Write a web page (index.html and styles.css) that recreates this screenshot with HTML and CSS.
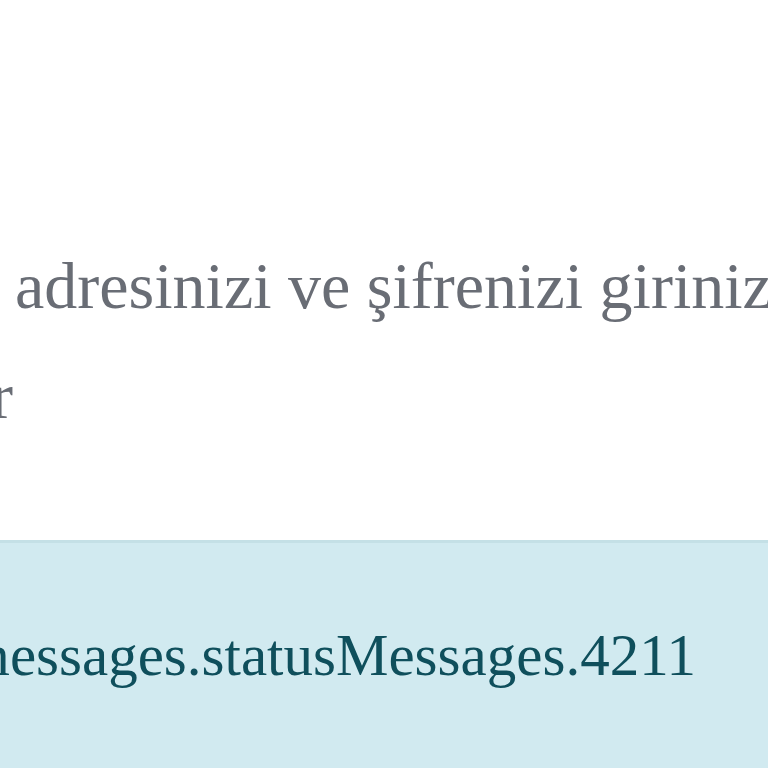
FILE: index.html
```html
<!DOCTYPE html>
<html lang="tr">
<head>
    <meta charset="UTF-8">
    <meta name="viewport" content="width=device-width, initial-scale=1.0">
    <title>Giriş</title>
    <link rel="stylesheet" href="styles.css">
</head>
<body>
    <div class="page">
        <p class="lead">
            <span class="line first">adresinizi ve şifrenizi giriniz</span>
            <span class="line second">r</span>
        </p>

        <div class="alert">
            <span class="message">messages.statusMessages.4211</span>
        </div>
    </div>
</body>
</html>
```

FILE: styles.css
```css
/* Basic Styling */
html, body {
    height: 100%;
}

body {
    margin: 0;
    overflow: hidden;
    background-color: #fff;
    font-family: "Liberation Serif", "Times New Roman", serif;
}

.page {
    padding-top: 231px;
    min-height: 100%;
    box-sizing: border-box;
    display: flex;
    flex-direction: column;
}

/* Lead text */
.lead {
    margin: 0;
    font-size: 66px;
    line-height: 110px;
    color: #696d75;
}

.line {
    display: block;
    white-space: nowrap;
}

.first {
    margin-left: 15px;
}

.second {
    margin-left: -9px;
}

/* Info alert */
.alert {
    flex: 1;
    margin-top: 89px;
    padding-top: 68px;
    background-color: #d1eaf0;
    border-top: 3px solid #c4e0e6;
    color: #0f4f5c;
    font-size: 59px;
    line-height: 88px;
    white-space: nowrap;
}

.message {
    display: block;
    margin-left: -36px;
}
```
